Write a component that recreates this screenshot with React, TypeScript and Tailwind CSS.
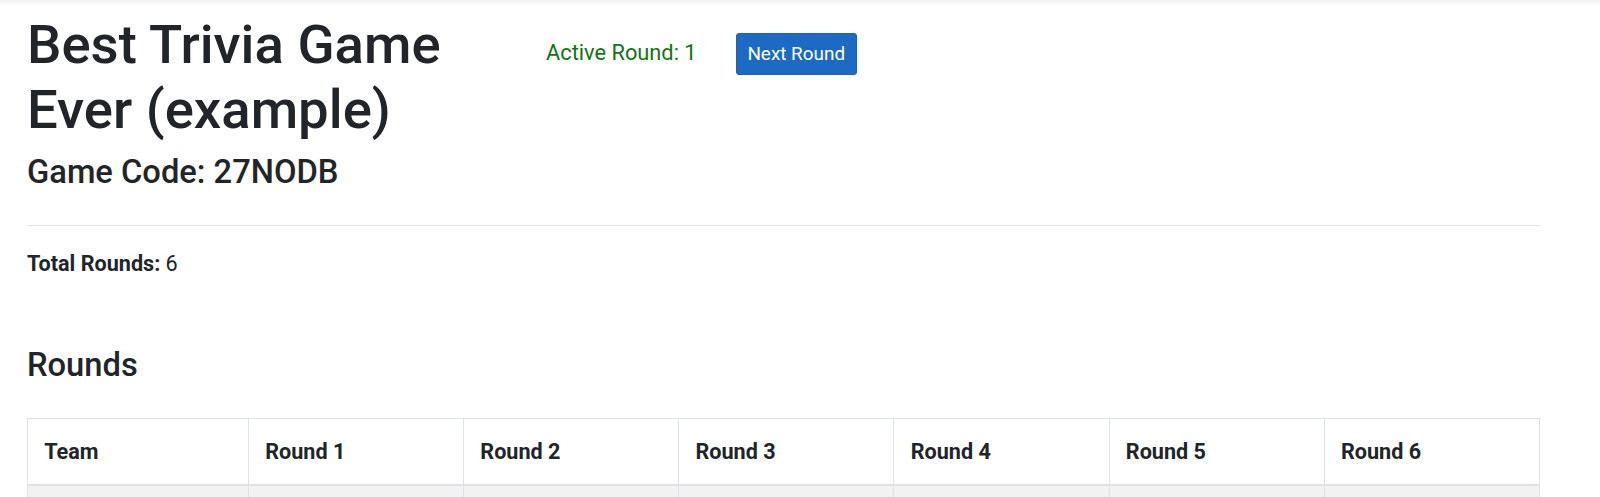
import React from "react";

export default function App() {
  const rounds = ["Round 1", "Round 2", "Round 3", "Round 4", "Round 5", "Round 6"];
  return (
    <div className="relative min-h-screen bg-white font-['Roboto',_'Liberation_Sans',_sans-serif] text-[#212529]">
      <div className="absolute left-0 right-0 top-0 h-[6px] bg-linear-to-b from-[#f1f1f1] to-white" />
      <div className="ml-[27px] w-[1513px] pt-[12px]">
        <div className="flex items-start">
          <div className="w-[504px]">
            <h1 className="text-[54.5px] leading-[65px] font-medium">Best Trivia Game Ever (example)</h1>
            <h4 className="mt-[11px] text-[32.7px] leading-[39px] font-medium">Game Code: 27NODB</h4>
          </div>
          <div className="ml-[15px] mt-[25px] text-[21.8px] leading-[32.4px] text-[#0f760f]">Active Round: 1</div>
          <button className="ml-[39px] mt-[21px] h-[42px] rounded-[3px] border border-[#1a63b9] bg-[#1c6ac4] px-[10.8px] text-[18.9px] leading-[28px] text-white">
            Next Round
          </button>
        </div>
        <hr className="mt-[33px] border-0 border-t border-[#e6e6e6]" />
        <p className="mt-[22px] text-[21.6px] leading-[32.4px]">
          <span className="font-bold">Total Rounds:</span> 6
        </p>
        <h4 className="mt-[66px] text-[32.7px] leading-[39px] font-medium">Rounds</h4>
        <table className="mt-[33px] w-[1513px] table-fixed border-collapse">
          <colgroup>
            <col className="w-[221px]" />
            {rounds.map((r) => (
              <col key={r} />
            ))}
          </colgroup>
          <thead>
            <tr>
              <th className="border border-b-2 border-[#dee2e6] px-[16.2px] py-[16.2px] text-left text-[21.6px] leading-[32.4px] font-bold">
                Team
              </th>
              {rounds.map((r) => (
                <th
                  key={r}
                  className="border border-b-2 border-[#dee2e6] px-[16.2px] py-[16.2px] text-left text-[21.6px] leading-[32.4px] font-bold"
                >
                  {r}
                </th>
              ))}
            </tr>
          </thead>
          <tbody>
            <tr className="bg-[#f2f2f2]">
              <td className="border border-[#dee2e6] px-[16.2px] py-[16.2px] text-[21.6px] leading-[32.4px]">&nbsp;</td>
              {rounds.map((r) => (
                <td key={r} className="border border-[#dee2e6] px-[16.2px] py-[16.2px] text-[21.6px] leading-[32.4px]">
                  &nbsp;
                </td>
              ))}
            </tr>
          </tbody>
        </table>
      </div>
    </div>
  );
}
